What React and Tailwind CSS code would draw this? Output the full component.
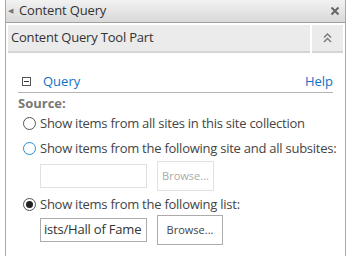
import { useState } from 'react';

function Radio({ checked, focused }) {
  return (
    <span
      className={`w-[13px] h-[13px] rounded-full border flex items-center justify-center shrink-0 bg-white ${
        focused ? 'border-[#2a8dd4]' : 'border-[#555]'
      }`}
    >
      {checked && <span className="w-[7px] h-[7px] rounded-full bg-[#222]" />}
    </span>
  );
}

export default function App() {
  const [source, setSource] = useState('list');

  const options = [
    { id: 'all', label: 'Show items from all sites in this site collection' },
    { id: 'site', label: 'Show items from the following site and all subsites:', focused: true },
  ];

  return (
    <div className="w-[348px] h-[256px] bg-white overflow-hidden font-['Open_Sans',sans-serif] text-[13px] text-[#444]">
      <div className="ml-[5px] w-[341px] h-full border-l border-r border-[#a8a8a8]">
        {/* title bar */}
        <div className="h-[23px] flex items-center px-[2px] bg-gradient-to-b from-[#f2f2f2] to-[#d9d9d9] border-b border-[#a0a0a0]">
          <span className="text-[7px] text-[#777] mr-[6px]">◀</span>
          <span className="text-[13px] text-[#333] tracking-[-0.15px]">Content Query</span>
          <svg className="ml-auto mr-[3px]" width="10" height="10" viewBox="0 0 10 10">
            <path d="M1.5 1.5 L8.5 8.5 M8.5 1.5 L1.5 8.5" stroke="#666" strokeWidth="2" />
          </svg>
        </div>

        {/* tool part header */}
        <div className="flex gap-[2px] mt-[2px] mx-[2px]">
          <div className="flex-1 h-[28px] bg-[#ebebeb] border-b-2 border-[#d4d4d4] flex items-center pl-[3px] text-[13px] text-[#333] tracking-[-0.2px]">
            Content Query Tool Part
          </div>
          <div className="w-[31px] h-[28px] bg-[#ebebeb] border-b-2 border-[#d4d4d4] flex items-center justify-center">
            <svg width="9" height="10" viewBox="0 0 9 10">
              <path d="M1 4.5 L4.5 1 L8 4.5 M1 9 L4.5 5.5 L8 9" stroke="#777" strokeWidth="1.4" fill="none" />
            </svg>
          </div>
        </div>

        <div className="pl-[12px] pr-[12px]">
          {/* query header */}
          <div className="mt-[20px] flex items-center border-b border-[#b3b3b3] pb-[3px]">
            <span className="ml-[4px] w-[9px] h-[9px] border border-[#555] flex items-center justify-center">
              <span className="w-[5px] h-px bg-[#333]" />
            </span>
            <span className="ml-[12px] text-[#0f72c4] text-[13px] leading-[16px]">Query</span>
            <span className="ml-auto text-[#0f72c4] text-[13px] leading-[16px]">Help</span>
          </div>

          <div className="mt-[2px] font-bold text-[#777] leading-[16px]">Source:</div>

          <div className="flex flex-col">
            {options.map((o) => (
              <label
                key={o.id}
                onClick={() => setSource(o.id)}
                className="h-[25px] flex items-center gap-[4px] pl-[5px] text-[#444] tracking-[-0.25px] whitespace-nowrap"
              >
                <Radio checked={source === o.id} focused={o.focused} />
                {o.label}
              </label>
            ))}
          </div>

          <div className="flex items-center ml-[22px] gap-[10px]">
            <div className="w-[107px] h-[24px] border border-[#e1e1e1]" />
            <div className="w-[57px] h-[30px] border border-[#e1e1e1] flex items-center justify-center text-[11px] text-[#aaa]">
              Browse...
            </div>
          </div>

          <label
            onClick={() => setSource('list')}
            className="mt-[1px] h-[25px] flex items-center gap-[4px] pl-[5px] text-[#444] tracking-[-0.25px] whitespace-nowrap"
          >
            <Radio checked={source === 'list'} />
            Show items from the following list:
          </label>

          <div className="flex items-center ml-[22px] -mt-[2px] gap-[10px]">
            <div className="w-[107px] h-[24px] border border-[#ababab] flex items-center pl-[3px] text-[#333] tracking-[-0.2px] overflow-hidden whitespace-nowrap">
              ists/Hall of Fame
            </div>
            <div className="w-[66px] h-[30px] border border-[#ababab] flex items-center justify-center text-[11px] text-[#444]">
              Browse...
            </div>
          </div>
        </div>
      </div>
    </div>
  );
}
